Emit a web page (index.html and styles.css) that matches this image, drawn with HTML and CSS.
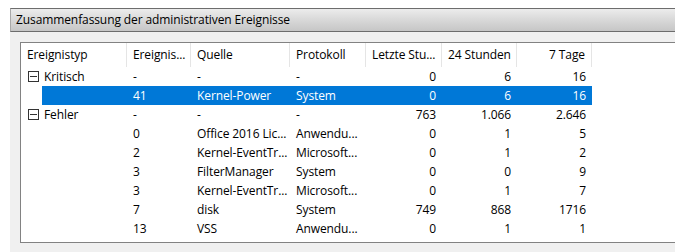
FILE: index.html
```html
<!DOCTYPE html>
<html lang="de">
<head>
  <meta charset="UTF-8">
  <title>Zusammenfassung der administrativen Ereignisse</title>
  <link rel="stylesheet" href="styles.css">
</head>
<body>
  <div class="panel">
    <div class="panel-title">Zusammenfassung der administrativen Ereignisse</div>
    <div class="panel-body">
      <div class="list">
        <div class="list-header">
          <div class="col">Ereignistyp</div>
          <div class="col">Ereignis...</div>
          <div class="col">Quelle</div>
          <div class="col">Protokoll</div>
          <div class="col num">Letzte Stu...</div>
          <div class="col num">24 Stunden</div>
          <div class="col num">7 Tage</div>
        </div>

        <div class="row group">
          <div class="cell"><span class="expander"></span>Kritisch</div>
          <div class="cell">-</div>
          <div class="cell">-</div>
          <div class="cell">-</div>
          <div class="cell num">0</div>
          <div class="cell num">6</div>
          <div class="cell num">16</div>
        </div>
        <div class="row child selected">
          <div class="cell"></div>
          <div class="cell">41</div>
          <div class="cell">Kernel-Power</div>
          <div class="cell">System</div>
          <div class="cell num">0</div>
          <div class="cell num">6</div>
          <div class="cell num">16</div>
        </div>

        <div class="row group">
          <div class="cell"><span class="expander"></span>Fehler</div>
          <div class="cell">-</div>
          <div class="cell">-</div>
          <div class="cell">-</div>
          <div class="cell num">763</div>
          <div class="cell num">1.066</div>
          <div class="cell num">2.646</div>
        </div>
        <div class="row child">
          <div class="cell"></div>
          <div class="cell">0</div>
          <div class="cell">Office 2016 Lic...</div>
          <div class="cell">Anwendu...</div>
          <div class="cell num">0</div>
          <div class="cell num">1</div>
          <div class="cell num">5</div>
        </div>
        <div class="row child">
          <div class="cell"></div>
          <div class="cell">2</div>
          <div class="cell">Kernel-EventTr...</div>
          <div class="cell">Microsoft...</div>
          <div class="cell num">0</div>
          <div class="cell num">1</div>
          <div class="cell num">2</div>
        </div>
        <div class="row child">
          <div class="cell"></div>
          <div class="cell">3</div>
          <div class="cell">FilterManager</div>
          <div class="cell">System</div>
          <div class="cell num">0</div>
          <div class="cell num">0</div>
          <div class="cell num">9</div>
        </div>
        <div class="row child">
          <div class="cell"></div>
          <div class="cell">3</div>
          <div class="cell">Kernel-EventTr...</div>
          <div class="cell">Microsoft...</div>
          <div class="cell num">0</div>
          <div class="cell num">1</div>
          <div class="cell num">7</div>
        </div>
        <div class="row child">
          <div class="cell"></div>
          <div class="cell">7</div>
          <div class="cell">disk</div>
          <div class="cell">System</div>
          <div class="cell num">749</div>
          <div class="cell num">868</div>
          <div class="cell num">1716</div>
        </div>
        <div class="row child">
          <div class="cell"></div>
          <div class="cell">13</div>
          <div class="cell">VSS</div>
          <div class="cell">Anwendu...</div>
          <div class="cell num">0</div>
          <div class="cell num">1</div>
          <div class="cell num">1</div>
        </div>
      </div>
    </div>
  </div>
</body>
</html>
```

FILE: styles.css
```css
* {
  margin: 0;
  padding: 0;
  box-sizing: border-box;
}

body {
  background: #FFFFFF;
  color: #000000;
  font-family: 'Open Sans', 'Noto Sans', sans-serif;
  font-size: 12px;
  letter-spacing: -0.1px;
  height: 100vh;
  overflow: hidden;
}

.panel {
  margin: 8px 0 0 10px;
  height: calc(100vh - 8px);
  background: #F0F0F0;
}

.panel-title {
  height: 24px;
  line-height: 22px;
  padding-left: 5px;
  border-top: 1px solid #6D6D6D;
  border-bottom: 1px solid #6D6D6D;
  border-left: 1px solid #A8A8A8;
  background: linear-gradient(180deg, #ECECEC 0%, #DADADA 45%, #C6C6C6 100%);
  white-space: nowrap;
}

.panel-body {
  padding: 10px 0 0 10px;
}

.list {
  height: 201px;
  background: #FFFFFF;
  border: 1px solid #828282;
  border-right: none;
  overflow: hidden;
}

.list-header,
.row {
  display: grid;
  grid-template-columns: 106px 64px 99px 76px 76px 75px 75px;
  white-space: nowrap;
}

.list-header {
  height: 24px;
  line-height: 23px;
}

.col {
  padding: 0 6px;
  border-right: 1px solid #E5E5E5;
  overflow: hidden;
}

.row {
  height: 19px;
  line-height: 19px;
}

.cell {
  padding: 0 6px;
  overflow: hidden;
}

.num {
  text-align: right;
}

.group .cell:first-child {
  display: flex;
  align-items: center;
  gap: 5px;
  padding-left: 7px;
}

.expander {
  width: 11px;
  height: 11px;
  border: 1px solid #333333;
  position: relative;
  flex: none;
}

.expander::after {
  content: '';
  position: absolute;
  left: 1px;
  right: 1px;
  top: 4px;
  height: 1px;
  background: #333333;
}

.row.child {
  grid-template-columns: 21px 85px 64px 99px 76px 76px 75px 75px;
}

.row.child .cell:first-child {
  grid-column: 1 / 3;
  padding: 0;
}

.row.selected {
  color: #FFFFFF;
}

.row.selected .cell {
  background: #0078D7;
}

.row.selected .cell:first-child {
  background: linear-gradient(90deg, #FFFFFF 21px, #0078D7 21px);
}
```
